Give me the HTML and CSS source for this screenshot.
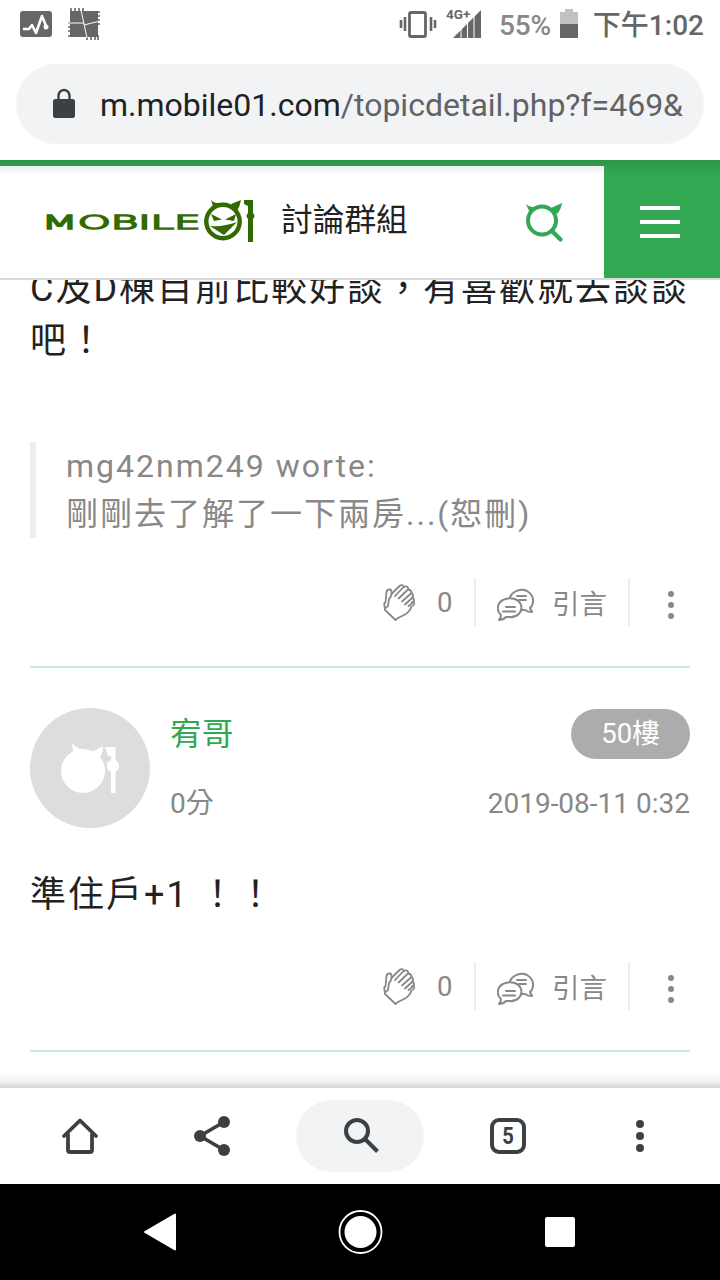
FILE: index.html
```html
<!DOCTYPE html>
<html lang="zh-Hant">
<head>
<meta charset="utf-8">
<title>mobile01</title>
<link rel="stylesheet" href="styles.css">
</head>
<body>
<svg class="defs" width="0" height="0">
  <symbol id="clap" viewBox="0 0 36 40">
    <g fill="none" stroke="#888" stroke-width="1.800" stroke-linecap="round" stroke-linejoin="round">
      <path d="M10.500 12V9.500Q10.500 7.500 8.500 7.500Q6 7.500 5.500 10L4.500 20Q2.500 21.500 3.500 24L4 28L14.500 38L17 36L25 32Q30 28 30 25Q34.500 22.500 33 20.500Q32.500 19.500 31 20"/>
      <path d="M10.500 12Q10.500 14.500 8 17L7 24L4.500 26"/>
      <path d="M10.500 12L18.500 4Q21 2 23 4.500L14 14"/>
      <path d="M23 5Q26.500 3 27.500 7L17.500 16.500"/>
      <path d="M27.500 7.500Q30.500 8 30.500 11L21 19.500"/>
      <path d="M30.500 11Q33 13 31.500 15.500L24 22.500"/>
      <path d="M31.500 15.500Q34 17.500 32.500 20L27.500 24"/>
    </g>
  </symbol>
  <symbol id="quote" viewBox="0 0 38 36">
    <g fill="none" stroke="#888" stroke-width="2" stroke-linecap="round" stroke-linejoin="round">
      <path d="M13 10C16 4 24 1 30 4C37 8 38 16 33 21L35 25Q31 25 28 23L24 23"/>
      <path d="M2 33Q4 31 4 28C-1 24 0 16 6 13C13 9 22 12 24 18C26 25 20 31 12 30L9 30Q6 33 2 33Z"/>
      <path d="M20 9H29M22 13H29M9 20H18M6 24.500H18"/>
    </g>
  </symbol>
</svg>

<header class="status">
  <svg width="84" height="40" viewBox="0 0 84 40">
    <rect x="0" y="11" width="32" height="26" rx="3" fill="#666"/>
    <path d="M3 29h6l3-4 4 8 6-17 4 10" fill="none" stroke="#fff" stroke-width="2.600" stroke-linejoin="round"/>
    <circle cx="26" cy="27" r="2.500" fill="#fff"/>
    <path d="M50 11H78V37H50Z" fill="#666"/>
    <path d="M51 8v5M55 8v5M59 8v5M63 8v5M67 35v5M71 35v5M75 35v5M78 35v5M75 12h5M75 16h5M75 20h5M75 24h5M48 23h5M48 27h5M48 31h5M48 36h5" stroke="#666" stroke-width="1.600"/>
    <path d="M61 10L67 38M48 23H64M64 25L80 21" stroke="#fff" stroke-width="1"/>
  </svg>
  <div class="status-right">
    <svg class="vibrate" width="38" height="30" viewBox="0 0 38 30">
      <path d="M2 11v8M6 8v14M32 8v14M36 11v8" stroke="#666" stroke-width="2.600"/>
      <rect x="10.500" y="3.500" width="16" height="24" rx="1.500" fill="none" stroke="#666" stroke-width="2.800"/>
    </svg>
    <svg class="signal" width="36" height="32" viewBox="0 0 36 32">
      <path d="M7 30L35 2V30Z" fill="#666"/>
      <path d="M15 16v15M21.500 8v23M28 6v25" stroke="#fff" stroke-width="1"/>
      <text x="0" y="10.500" font-family="Roboto, sans-serif" font-weight="700" font-size="13.500" fill="#666">4G+</text>
    </svg>
    <span class="percent">55%</span>
    <svg class="battery" width="20" height="30" viewBox="0 0 20 30">
      <path d="M1 3h5V0h8v3h5v12H1Z" fill="#c1c1c1"/><path d="M1 15h18v14H1Z" fill="#666"/>
    </svg>
    <span class="clock">下午1:02</span>
  </div>
</header>

<div class="address">
  <div class="omnibox">
    <svg width="24" height="32" viewBox="0 0 24 32">
      <rect x="1" y="11" width="22" height="19" rx="2.500" fill="#3c4043"/>
      <path d="M6.500 12V7.500a5.500 5.500 0 0 1 11 0V12" fill="none" stroke="#3c4043" stroke-width="2.400"/>
    </svg>
    <span class="url">m.mobile01.com<span class="path">/topicdetail.php?f=469&amp;</span></span>
  </div>
</div>

<main class="page">
  <div class="site-header">
    <svg class="logo" width="214" height="48" viewBox="0 0 214 48">
      <text class="wordmark" transform="translate(-2.500 33) scale(2.100 1)">MOBILE</text>
      <circle cx="179" cy="25.500" r="16.700" fill="none" stroke="#306a00" stroke-width="4.400"/>
      <path d="M167 4Q171 8 178 7L170 13ZM197 4L187 8L193 15Q196 10 197 4ZM167 18L178 23.500L170 25ZM192 18L181 23.500L190 25ZM166 30Q180 31 193 26L180 39Z" fill="#306a00"/>
      <path d="M200 4H209V17Q212 20 209 23V46H204V23Q201 20 204 17V10L200 8Z" fill="#306a00"/>
    </svg>
    <span class="section">討論群組</span>
    <svg class="find" width="40" height="40" viewBox="0 0 40 40">
      <path d="M1 2Q5 6 10 5L5 11ZM37 1L26 6L32 12Q36 8 37 1Z" fill="#32a852"/>
      <circle cx="17" cy="18.500" r="14" fill="none" stroke="#32a852" stroke-width="4"/>
      <path d="M27 29L35.500 37.500" stroke="#32a852" stroke-width="4.200" stroke-linecap="round"/>
    </svg>
    <div class="menu"><i></i><i></i><i></i></div>
  </div>

  <div class="thread">
    <article class="post first">
      <p class="body">C及D棟目前比較好談，有喜歡就去談談<br>吧！</p>
      <blockquote>mg42nm249 worte:<br>剛剛去了解了一下兩房...(恕刪)</blockquote>
      <div class="actions">
        <div class="like"><svg width="36" height="40"><use href="#clap"/></svg><span>0</span></div>
        <div class="cite"><svg width="38" height="36"><use href="#quote"/></svg><span>引言</span></div>
        <div class="more"><i></i><i></i><i></i></div>
      </div>
    </article>
    <article class="post">
      <div class="author">
        <svg width="120" height="120" viewBox="0 0 120 120">
          <circle cx="60" cy="60" r="60" fill="#ddd"/>
          <circle cx="53" cy="63" r="22" fill="#fff"/>
          <path d="M42 35Q48 42 56 42L44 49ZM73 38L60 45L68 53Q73 46 73 38ZM75 39H85.500V85H81V48H78Z" fill="#fff"/>
          <circle cx="83" cy="58" r="6.200" fill="#fff"/>
        </svg>
        <div class="who"><span class="name">宥哥</span><span class="meta">0分</span></div>
        <div class="when"><span class="floor">50樓</span><span class="meta">2019-08-11 0:32</span></div>
      </div>
      <p class="body">準住戶+1 ！！</p>
      <div class="actions">
        <div class="like"><svg width="36" height="40"><use href="#clap"/></svg><span>0</span></div>
        <div class="cite"><svg width="38" height="36"><use href="#quote"/></svg><span>引言</span></div>
        <div class="more"><i></i><i></i><i></i></div>
      </div>
    </article>
  </div>
</main>

<nav class="toolbar">
  <svg width="40" height="40" viewBox="0 0 40 40">
    <path d="M4 20L20 4.500L36 20M8 18V34Q8 36 10 36H30Q32 36 32 34V18" fill="none" stroke="#3c4043" stroke-width="3.800" stroke-linecap="round" stroke-linejoin="round"/>
  </svg>
  <svg width="40" height="40" viewBox="0 0 40 40">
    <path d="M32 6L8 20L32 34" fill="none" stroke="#3c4043" stroke-width="3.600"/>
    <circle cx="32" cy="6" r="6" fill="#3c4043"/><circle cx="8" cy="20" r="6" fill="#3c4043"/><circle cx="32" cy="34" r="6" fill="#3c4043"/>
  </svg>
  <div class="search-pill">
    <svg width="40" height="40" viewBox="0 0 40 40">
      <circle cx="17" cy="15" r="11" fill="none" stroke="#3c4043" stroke-width="4"/>
      <path d="M24.500 22.500L37.500 35.500" stroke="#3c4043" stroke-width="4"/>
    </svg>
  </div>
  <div class="tabs"><span>5</span></div>
  <div class="dots"><i></i><i></i><i></i></div>
</nav>

<footer class="sysnav">
  <svg width="32" height="40" viewBox="0 0 32 40"><path d="M1 20L31 2.500V37.500Z" fill="#fff" stroke="#fff" stroke-width="2" stroke-linejoin="round"/></svg>
  <svg width="44" height="44" viewBox="0 0 44 44"><circle cx="21.500" cy="22" r="21" fill="none" stroke="#fff" stroke-width="1.800"/><circle cx="21.500" cy="22" r="16" fill="#fff"/></svg>
  <svg width="30" height="30" viewBox="0 0 30 30"><rect width="30" height="30" rx="2" fill="#fff"/></svg>
</footer>
</body>
</html>
```
FILE: styles.css
```css
* { box-sizing: border-box; }
body {
  margin: 0;
  width: 720px;
  height: 1280px;
  display: flex;
  flex-direction: column;
  overflow: hidden;
  background: #fff;
  font-family: Roboto, "Noto Sans CJK TC", sans-serif;
}
svg { display: block; flex: none; overflow: visible; }
.defs { position: absolute; }

.status {
  height: 48px;
  flex: none;
  display: flex;
  justify-content: space-between;
  padding: 0 16px 0 20px;
  color: #666;
}
.status-right { display: flex; height: 48px; align-items: center; }
.vibrate { margin-right: 9px; }
.signal { margin: 0 17px 0 0; }
.percent { font-size: 28px; color: #888; font-weight: 500; line-height: 48px; letter-spacing: -0.200px; margin-top: 3px; }
.battery { margin: 0 14px 0 8px; }
.clock { font-size: 28px; font-weight: 500; line-height: 48px; white-space: nowrap; margin-top: 3px; }

.address { height: 112px; flex: none; padding: 16px; }
.omnibox {
  height: 80px;
  border-radius: 40px;
  background: #f1f3f4;
  padding: 0 0 0 36px;
  display: flex;
  align-items: center;
  gap: 24px;
  overflow: hidden;
}
.url { font-size: 32px; color: #202124; white-space: nowrap; padding-top: 2px; }
.path { color: #5f6368; }

.page { position: relative; height: 928px; flex: none; overflow: hidden; }
.page::before,
.page::after {
  content: "";
  position: absolute;
  z-index: 2;
  left: 0;
  right: 0;
}
.page::before { top: 0; height: 14px; background: linear-gradient(rgba(0,0,0,.12), transparent); }
.page::after { bottom: 0; height: 16px; background: linear-gradient(transparent, rgba(0,0,0,.05) 60%, rgba(0,0,0,.17)); }

.site-header {
  position: relative;
  z-index: 1;
  height: 120px;
  display: flex;
  align-items: center;
  background: #fff;
  border-top: 6px solid #32a852;
  border-bottom: 2px solid #d9d9d9;
  padding-left: 44px;
}
.logo { margin-top: -4px; }
.wordmark {
  font: 200 20px "DejaVu Sans", sans-serif;
  fill: #306a00;
  stroke: #306a00;
  stroke-width: 2.600px;
  vector-effect: non-scaling-stroke;
}
.section { font-size: 31.700px; color: #222; margin: -10px 0 0 23px; }
.find { margin: 0 39px 0 auto; }
.menu {
  width: 116px;
  height: 112px;
  background: #32a852;
  display: flex;
  flex-direction: column;
  align-items: center;
  justify-content: center;
  gap: 10px;
  padding-right: 4px;
}
.menu i { width: 40px; height: 4px; background: #fff; }

.thread { padding: 0 30px; }
.post { border-bottom: 2px solid #cdead5; padding: 40px 0; }
.post.first { padding-top: 0; margin-top: -17px; }
.body {
  margin: 0;
  font-size: 36px;
  line-height: 52px;
  letter-spacing: 2px;
  color: #222;
  white-space: nowrap;
}
blockquote {
  margin: 75px 0 40px;
  padding-left: 30px;
  border-left: 6px solid #eee;
  font-size: 32px;
  line-height: 48px;
  letter-spacing: 2px;
  color: #888;
}
.actions {
  height: 48px;
  display: flex;
  justify-content: flex-end;
  font-size: 27.500px;
  color: #888;
}
.actions > div { display: flex; align-items: center; }
.like span { padding-top: 1px; }
.like { width: 95px; gap: 20px; border-right: 2px solid #eee; }
.cite { width: 154px; padding-left: 21px; gap: 17px; border-right: 2px solid #eee; }
.cite svg { margin-top: 6px; }
.cite span { margin-top: -1px; }
.more { width: 60px; padding: 6px 0 0 38px; flex-direction: column; gap: 5px; justify-content: center; }
.actions > .more { align-items: flex-start; }
.more i { width: 6px; height: 6px; border-radius: 50%; background: #888; flex: none; }

.author { display: flex; height: 120px; margin-bottom: 41px; }
.author + .body { margin-bottom: 41px; }
.who, .when { display: flex; flex-direction: column; justify-content: space-between; }
.who { padding-left: 20px; }
.when { margin-left: auto; align-items: flex-end; padding-top: 1px; }
.name { font-size: 31.700px; line-height: 54px; color: #32a852; }
.meta { font-size: 28px; line-height: 48px; color: #888; }
.floor {
  width: 119px;
  height: 50px;
  border-radius: 25px;
  background: #acacac;
  color: #fff;
  font-size: 27.500px;
  line-height: 49px;
  text-align: center;
}

.toolbar {
  height: 96px;
  flex: none;
  display: grid;
  grid-template-columns: 160px 104px 192px 104px 160px;
  align-items: center;
  justify-items: center;
  background: #fff;
}
.search-pill {
  width: 128px;
  height: 72px;
  border-radius: 36px;
  background: #f1f3f4;
  display: flex;
  align-items: center;
  justify-content: center;
}
.tabs {
  width: 36px;
  height: 36px;
  border: 4px solid #3c4043;
  border-radius: 9px;
  color: #3c4043;
  font: 700 24px/28px Roboto, sans-serif;
  text-align: center;
}
.tabs span { display: block; transform: scaleX(.84); }
.dots { display: flex; flex-direction: column; gap: 4px; }
.dots i { width: 8px; height: 8px; border-radius: 50%; background: #3c4043; }

.sysnav {
  height: 96px;
  flex: none;
  background: #000;
  display: flex;
  align-items: center;
  justify-content: space-between;
  padding: 0 145px 0 144px;
}
```
